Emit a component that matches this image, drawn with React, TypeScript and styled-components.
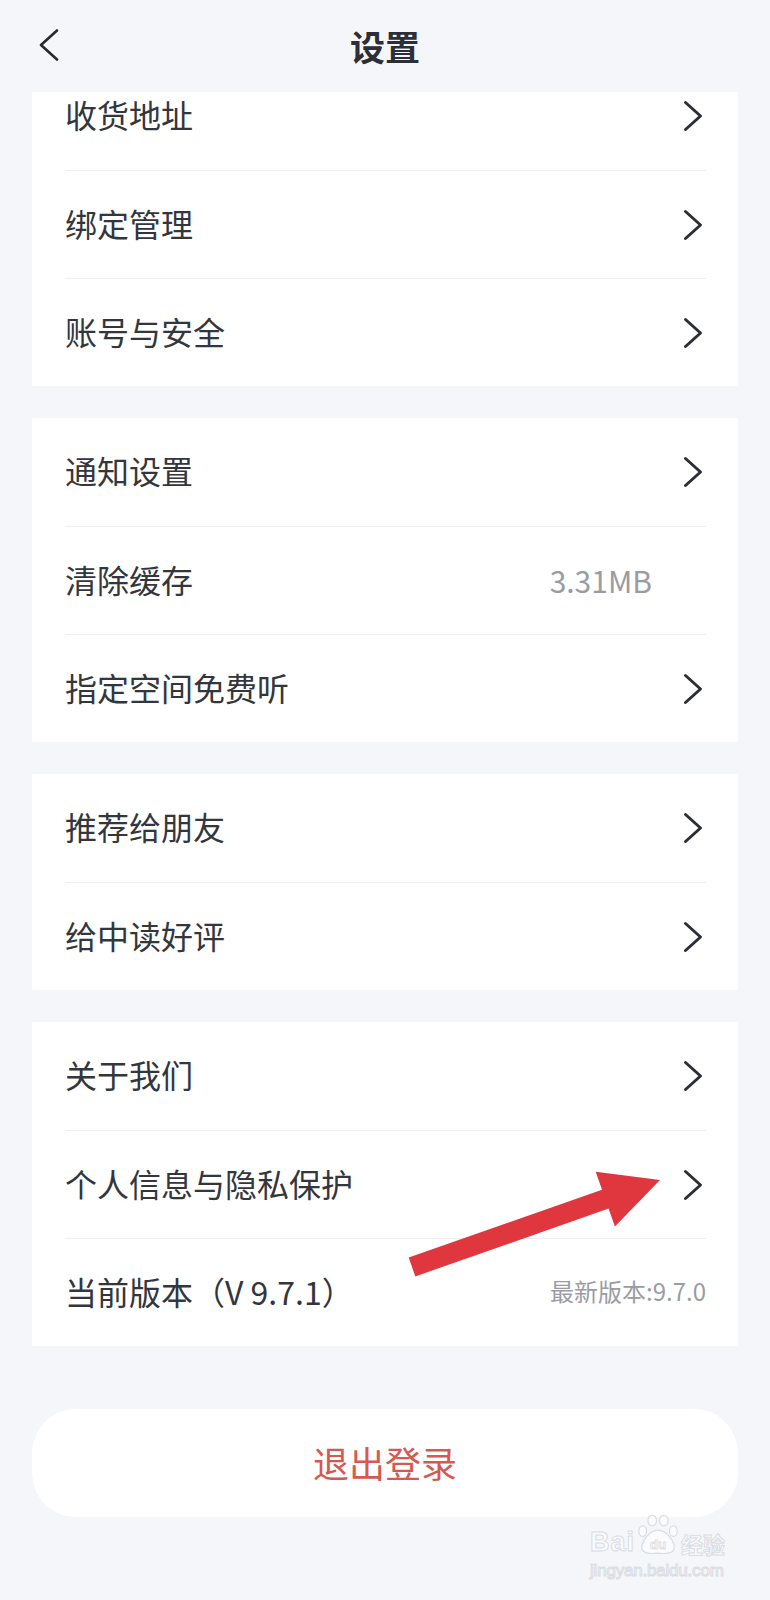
import React from 'react';
import styled, { createGlobalStyle } from 'styled-components';

const GlobalStyle = createGlobalStyle`
  *, *::before, *::after {
    box-sizing: border-box;
  }
  body {
    margin: 0;
    background: #f5f6f9;
    font-family: "Noto Sans CJK SC", "Noto Sans", sans-serif;
  }
`

const Page = styled.div`
  position: relative;
  width: 770px;
  min-height: 1600px;
  background: #f5f6f9;
  display: flex;
  flex-direction: column;
  overflow: hidden;
`
const Header = styled.div`
  height: 92px;
  display: grid;
  grid-template-columns: 1fr auto 1fr;
  align-items: center;
  padding: 0 38px 2px;
  flex-shrink: 0;
`
const BackButton = styled.div`
  display: flex;
  align-items: center;
  color: #26292f;
`
const Title = styled.h1`
  margin: 0;
  font-size: 35px;
  font-weight: 700;
  line-height: 1;
  color: #2c2f36;
`
const Scroller = styled.div`
  overflow: hidden;
`
const Stack = styled.div`
  margin-top: -30px;
  display: flex;
  flex-direction: column;
  gap: 32px;
`
const Card = styled.div`
  margin: 0 32px;
  background: #fff;
  border-radius: 2px;
  padding: 0 32px 0 33px;
`
const Row = styled.div`
  height: 108px;
  display: flex;
  align-items: center;
  & + & {
    border-top: 1px solid #eeeff2;
  }
`
const Label = styled.span`
  flex: 1;
  font-size: 32px;
  line-height: 1.2;
  padding-bottom: 3px;
  color: #33363c;
`
const Value = styled.span<{ $size: number; $inset: number }>`
  font-size: ${p => p.$size}px;
  line-height: 1.2;
  padding-bottom: 2px;
  color: #9a9ca3;
  margin-right: ${p => p.$inset}px;
`
const LogoutButton = styled.button`
  margin: 63px 32px 0;
  height: 108px;
  border: none;
  border-radius: 44px;
  background: #fff;
  font-family: "Noto Sans CJK SC", sans-serif;
  font-size: 36px;
  padding-bottom: 4px;
  color: #d6594f;
  cursor: pointer;
`
const Watermark = styled.div`
  position: absolute;
  left: 590px;
  top: 1514px;
  width: 142px;
  display: flex;
  flex-direction: column;
  align-items: flex-start;
  color: #fbfbfd;
  -webkit-text-stroke: 1px #d9dce3;
  font-family: "Liberation Sans", sans-serif;
`
const MarkTop = styled.div`
  display: flex;
  align-items: flex-end;
  gap: 1px;
`
const MarkBai = styled.span`
  font-size: 27px;
  font-weight: 700;
  line-height: 1;
  letter-spacing: 1px;
`
const MarkJy = styled.span`
  font-family: "Noto Sans CJK SC", sans-serif;
  font-size: 22px;
  font-weight: 700;
  line-height: 1;
  padding-bottom: 2px;
`
const MarkUrl = styled.span`
  font-size: 17px;
  line-height: 1;
  margin-top: 6px;
  letter-spacing: -0.2px;
`
const Overlay = styled.svg`
  position: absolute;
  left: 0;
  top: 0;
  pointer-events: none;
`

type Item = { label: string; value?: string; size?: number; inset?: number; arrow?: boolean };

const groups: Item[][] = [
  [
    { label: '收货地址', arrow: true },
    { label: '绑定管理', arrow: true },
    { label: '账号与安全', arrow: true },
  ],
  [
    { label: '通知设置', arrow: true },
    { label: '清除缓存', value: '3.31MB', size: 30, inset: 54 },
    { label: '指定空间免费听', arrow: true },
  ],
  [
    { label: '推荐给朋友', arrow: true },
    { label: '给中读好评', arrow: true },
  ],
  [
    { label: '关于我们', arrow: true },
    { label: '个人信息与隐私保护', arrow: true },
    { label: '当前版本（V 9.7.1）', value: '最新版本:9.7.0', size: 24, inset: 0 },
  ],
];

function Chevron() {
  return (
    <svg width="24" height="32" viewBox="0 0 24 32" fill="none">
      <path d="M3.5 2.5 L18.5 16 L3.5 29.5" stroke="#2b2e35" strokeWidth="3" strokeLinecap="round" strokeLinejoin="round" />
    </svg>
  );
}

function BackIcon() {
  return (
    <svg width="22" height="32" viewBox="0 0 22 32" fill="none">
      <path d="M19 1.5 L3 16 L19 30.5" stroke="currentColor" strokeWidth="2.6" strokeLinecap="round" strokeLinejoin="round" />
    </svg>
  );
}

function Paw() {
  return (
    <svg width="44" height="42" viewBox="0 0 46 42" fill="#fbfbfd" stroke="#d9dce3" strokeWidth="1.3">
      <ellipse cx="7" cy="17" rx="4" ry="5.5" />
      <ellipse cx="17" cy="6" rx="4.5" ry="5.5" />
      <ellipse cx="29" cy="6" rx="4.5" ry="5.5" />
      <ellipse cx="39" cy="17" rx="4" ry="5.5" />
      <path d="M23 16 C14 16 6 28 6 34 C6 40 14 41 23 40 C32 41 40 40 40 34 C40 28 32 16 23 16 Z" />
      <text x="23" y="36" textAnchor="middle" fontFamily="Liberation Sans, sans-serif" fontSize="14" fontWeight="700" strokeWidth="0.8">du</text>
    </svg>
  );
}

export default function App() {
  return (
    <Page>
      <GlobalStyle />
      <Header>
        <BackButton><BackIcon /></BackButton>
        <Title>设置</Title>
        <span />
      </Header>
      <Scroller>
        <Stack>
          {groups.map((group, i) => (
            <Card key={i}>
              {group.map(item => (
                <Row key={item.label}>
                  <Label>{item.label}</Label>
                  {item.value && (
                    <Value $size={item.size ?? 28} $inset={item.inset ?? 0}>{item.value}</Value>
                  )}
                  {item.arrow && <Chevron />}
                </Row>
              ))}
            </Card>
          ))}
        </Stack>
      </Scroller>
      <LogoutButton>退出登录</LogoutButton>

      <Watermark>
        <MarkTop>
          <MarkBai>Bai</MarkBai>
          <Paw />
          <MarkJy>经验</MarkJy>
        </MarkTop>
        <MarkUrl>jingyan.baidu.com</MarkUrl>
      </Watermark>

      <Overlay width="770" height="1600" viewBox="0 0 770 1600">
        <polygon
          points="408.7,1257.6 602,1189.8 595.7,1171.8 660,1180 614.9,1226.6 608.6,1208.6 415.3,1276.4"
          fill="#e0373f"
        />
      </Overlay>
    </Page>
  );
}
